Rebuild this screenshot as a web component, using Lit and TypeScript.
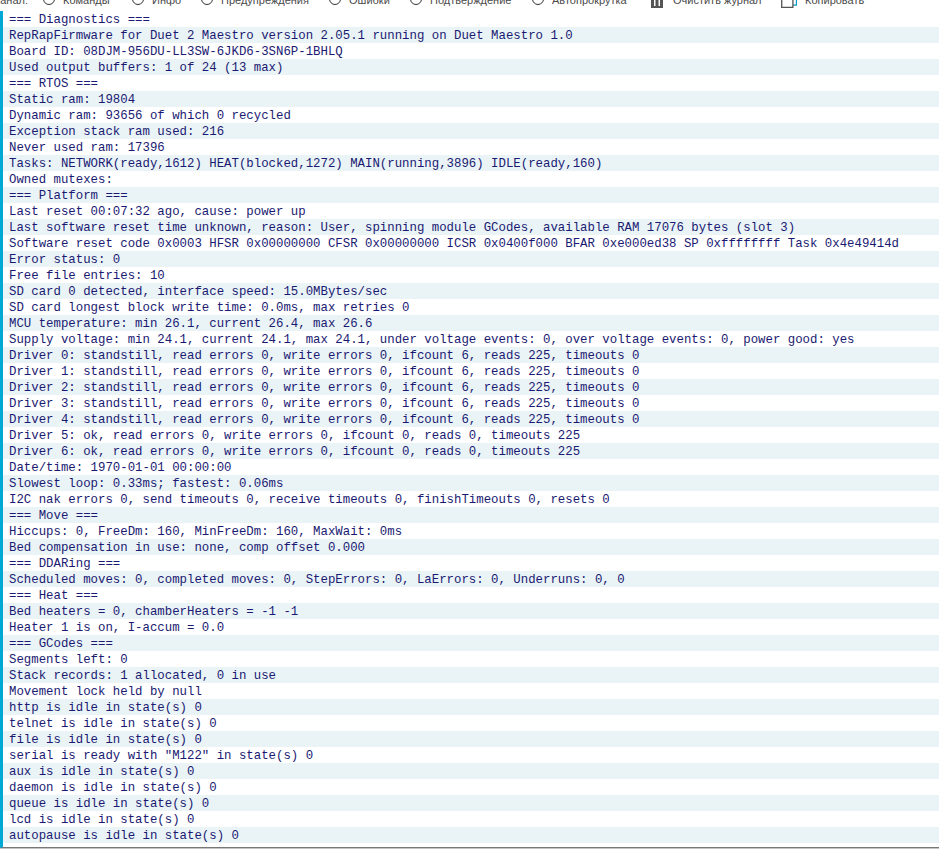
import { LitElement, html, css } from "lit";
import { customElement } from "lit/decorators.js";

const LINES = `=== Diagnostics ===
RepRapFirmware for Duet 2 Maestro version 2.05.1 running on Duet Maestro 1.0
Board ID: 08DJM-956DU-LL3SW-6JKD6-3SN6P-1BHLQ
Used output buffers: 1 of 24 (13 max)
=== RTOS ===
Static ram: 19804
Dynamic ram: 93656 of which 0 recycled
Exception stack ram used: 216
Never used ram: 17396
Tasks: NETWORK(ready,1612) HEAT(blocked,1272) MAIN(running,3896) IDLE(ready,160)
Owned mutexes:
=== Platform ===
Last reset 00:07:32 ago, cause: power up
Last software reset time unknown, reason: User, spinning module GCodes, available RAM 17076 bytes (slot 3)
Software reset code 0x0003 HFSR 0x00000000 CFSR 0x00000000 ICSR 0x0400f000 BFAR 0xe000ed38 SP 0xffffffff Task 0x4e49414d
Error status: 0
Free file entries: 10
SD card 0 detected, interface speed: 15.0MBytes/sec
SD card longest block write time: 0.0ms, max retries 0
MCU temperature: min 26.1, current 26.4, max 26.6
Supply voltage: min 24.1, current 24.1, max 24.1, under voltage events: 0, over voltage events: 0, power good: yes
Driver 0: standstill, read errors 0, write errors 0, ifcount 6, reads 225, timeouts 0
Driver 1: standstill, read errors 0, write errors 0, ifcount 6, reads 225, timeouts 0
Driver 2: standstill, read errors 0, write errors 0, ifcount 6, reads 225, timeouts 0
Driver 3: standstill, read errors 0, write errors 0, ifcount 6, reads 225, timeouts 0
Driver 4: standstill, read errors 0, write errors 0, ifcount 6, reads 225, timeouts 0
Driver 5: ok, read errors 0, write errors 0, ifcount 0, reads 0, timeouts 225
Driver 6: ok, read errors 0, write errors 0, ifcount 0, reads 0, timeouts 225
Date/time: 1970-01-01 00:00:00
Slowest loop: 0.33ms; fastest: 0.06ms
I2C nak errors 0, send timeouts 0, receive timeouts 0, finishTimeouts 0, resets 0
=== Move ===
Hiccups: 0, FreeDm: 160, MinFreeDm: 160, MaxWait: 0ms
Bed compensation in use: none, comp offset 0.000
=== DDARing ===
Scheduled moves: 0, completed moves: 0, StepErrors: 0, LaErrors: 0, Underruns: 0, 0
=== Heat ===
Bed heaters = 0, chamberHeaters = -1 -1
Heater 1 is on, I-accum = 0.0
=== GCodes ===
Segments left: 0
Stack records: 1 allocated, 0 in use
Movement lock held by null
http is idle in state(s) 0
telnet is idle in state(s) 0
file is idle in state(s) 0
serial is ready with "M122" in state(s) 0
aux is idle in state(s) 0
daemon is idle in state(s) 0
queue is idle in state(s) 0
lcd is idle in state(s) 0
autopause is idle in state(s) 0`.split("\n");

const RADIOS: [string, number][] = [
  ["Команды", 47],
  ["Инфо", 27],
  ["Предупреждения", 86],
  ["Ошибки", 39],
  ["Подтверждение", 80],
  ["Автопрокрутка", 76],
];

@customElement("app-root")
export class AppRoot extends LitElement {
  static styles = css`
    :host { display: block; width: 939px; height: 849px; overflow: hidden; background: #fff; }
    .top { height: 11px; overflow: hidden; display: flex; align-items: flex-end; font: 11px/16px "Liberation Sans", Arial, sans-serif; color: #4a4a4a; }
    .bar { display: flex; align-items: center; gap: 22px; height: 16px; flex: none; margin-bottom: 4px; white-space: nowrap; width: 100%; }
    .label { width: 35px; flex: none; margin: 0 -7px; text-align: right; padding-top: 2px; }
    .opt { display: flex; align-items: center; gap: 8px; }
    .txt { flex: none; padding-top: 2px; }
    .radio { width: 12px; height: 12px; box-sizing: border-box; border: 1.5px solid #333; border-radius: 50%; flex: none; margin-top: -1px; }
    .btn { display: flex; align-items: center; }
    .btn svg { flex: none; margin-top: 3px; }
    .trash { gap: 10px; margin-left: 1px; }
    .copy { gap: 8px; }
    .log {
      height: 837px; box-sizing: border-box; border-left: 3px solid #00a8d6; border-bottom: 1px solid #777;
      box-shadow: 0 1px 0 #c4c4c4;
      font: 12.37px/18px "Liberation Mono", "Courier New", monospace; color: #1a1a72;
    }
    .row { height: 16px; padding-left: 6px; white-space: pre; }
    .row:nth-child(even) { background: #eaf4f7; }
  `;

  render() {
    return html`
      <div class="top"><div class="bar">
        <span class="label">Канал:</span>
        ${RADIOS.map(([r, w]) => html`<span class="opt"><i class="radio"></i><span class="txt" style="width:${w}px">${r}</span></span>`)}
        <span class="btn trash">
          <svg width="12" height="14" viewBox="0 0 12 14"><path fill="#555" d="M0 0h12v14H0z"/><path fill="#fff" d="M3 3h1.5v9H3zM7.5 3H9v9H7.5z"/></svg>
          <span class="txt" style="width:86px">Очистить журнал</span>
        </span>
        <span class="btn copy">
          <svg width="16" height="14" viewBox="0 0 16 14" fill="none"><path stroke="#0a9ac4" stroke-width="1.2" d="M12 1h3.4v10.2H12"/><path stroke="#555" stroke-width="1.3" d="M.7.7h11.2v12.6H.7z"/></svg>
          <span class="txt" style="width:59px">Копировать</span>
        </span>
      </div></div>
      <div class="log">${LINES.map((l) => html`<div class="row">${l}</div>`)}</div>
    `;
  }
}
